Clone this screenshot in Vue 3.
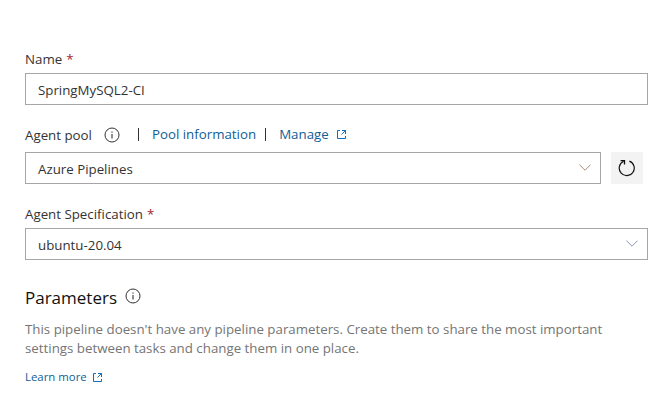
<script setup>
import { h } from 'vue'

const InfoIcon = () =>
  h('svg', { viewBox: '0 0 16 16', width: 16, height: 16, fill: 'none', stroke: 'currentColor' }, [
    h('circle', { cx: 8, cy: 8, r: 7, 'stroke-width': 1 }),
    h('path', { d: 'M8 7v4.5M8 4.5v1.2', 'stroke-width': 1.1 }),
  ])

const ExternalIcon = () =>
  h('svg', { viewBox: '0 0 9 9', width: 9, height: 9, fill: 'none', stroke: 'currentColor' }, [
    h('path', { d: 'M3 .5H.5v8h8V6M5 .5h3.5V4M8.5.5l-4 4' }),
  ])

const ChevronIcon = () =>
  h('svg', { viewBox: '0 0 12 7', width: 12, height: 7, fill: 'none', stroke: 'currentColor' }, [
    h('path', { d: 'M.4.6 6 6.2 11.6.6' }),
  ])
</script>

<template>
  <form class="panel" @submit.prevent>
    <div class="label"><span class="t-name">Name</span><span class="required">*</span></div>
    <div class="field"><span class="t-spring">SpringMySQL2-CI</span></div>

    <div class="label pool-label">
      <span class="t-pool">Agent pool</span>
      <InfoIcon class="info" />
      <i class="bar"></i>
      <a class="link t-info">Pool information</a>
      <i class="bar second"></i>
      <a class="link t-manage">Manage</a>
      <ExternalIcon class="external" />
    </div>
    <div class="pool-row">
      <div class="field select"><span class="t-azure">Azure Pipelines</span><ChevronIcon class="warm" /></div>
      <button class="refresh" type="button" aria-label="Refresh">
        <svg viewBox="0 0 18 18" width="18" height="18" fill="none" stroke="currentColor">
          <path d="M11.4 2.1A7.5 7.5 0 1 1 5.6 2.3" stroke-width="1.2" />
          <path d="M2.6 1.6h3.9v3.8" stroke-width="1.3" />
        </svg>
      </button>
    </div>

    <div class="label spec-label"><span class="t-spec">Agent Specification</span><span class="required">*</span></div>
    <div class="field select"><span class="t-ubuntu">ubuntu-20.04</span><ChevronIcon class="cool" /></div>

    <h2><span class="t-params">Parameters</span><InfoIcon class="info" /></h2>
    <p>
      <span class="t-line1">This pipeline doesn't have any pipeline parameters. Create them to share the most important</span><br />
      <span class="t-line2">settings between tasks and change them in one place.</span>
    </p>
    <div class="learn"><a class="link t-learn">Learn more</a><ExternalIcon class="external" /></div>
  </form>
</template>

<style>
body {
  background: #fff;
}
</style>

<style scoped>
.panel {
  box-sizing: border-box;
  width: 671px;
  height: 409px;
  padding: 49px 23px 0 25px;
  font: 13.3px/20px "Open Sans", "Noto Sans", sans-serif;
  color: #333;
  white-space: nowrap;
}
svg {
  display: block;
  flex: none;
}
.label {
  display: flex;
  height: 20px;
  margin-bottom: 4px;
}
.required {
  margin-left: 4px;
  color: #a4262c;
}
.field {
  display: flex;
  align-items: center;
  box-sizing: border-box;
  height: 32px;
  padding: 2px 9px 0 12px;
  border: 1px solid #a6a6a6;
}
.select {
  justify-content: space-between;
}
.select svg {
  margin-top: -3px;
}
.warm {
  color: #b08a78;
}
.cool {
  color: #8494b4;
}
.pool-label {
  margin-top: 20px;
  margin-bottom: 7px;
}
.pool-label .info {
  margin: 2px 0 0 12px;
}
.bar {
  width: 1px;
  height: 13px;
  margin: 3px 13px 0 18px;
  background: #333;
}
.bar.second {
  margin-left: 9px;
}
.link {
  color: #106096;
  margin-top: -1px;
}
.external {
  margin: 5px 0 0 8px;
  color: #106ebe;
}
.pool-row {
  display: flex;
  gap: 10px;
}
.pool-row .field {
  width: 576px;
}
.refresh {
  display: flex;
  align-items: center;
  justify-content: center;
  width: 32px;
  height: 32px;
  padding: 0;
  border: 0;
  background: #f3f3f3;
  color: #111;
}
.spec-label {
  margin-top: 20px;
}
h2 {
  display: flex;
  height: 26px;
  margin: 25px 0 9px;
  font-size: 17px;
  font-weight: 400;
  line-height: 26px;
  color: #111;
}
h2 .info {
  margin: 3px 0 0 8px;
  color: #333;
}
p {
  margin: 0;
  line-height: 19px;
  color: #757575;
}
.learn {
  display: flex;
  margin-top: 10px;
  font-size: 11.4px;
}
.learn .external {
  margin-left: 6px;
}
</style>
